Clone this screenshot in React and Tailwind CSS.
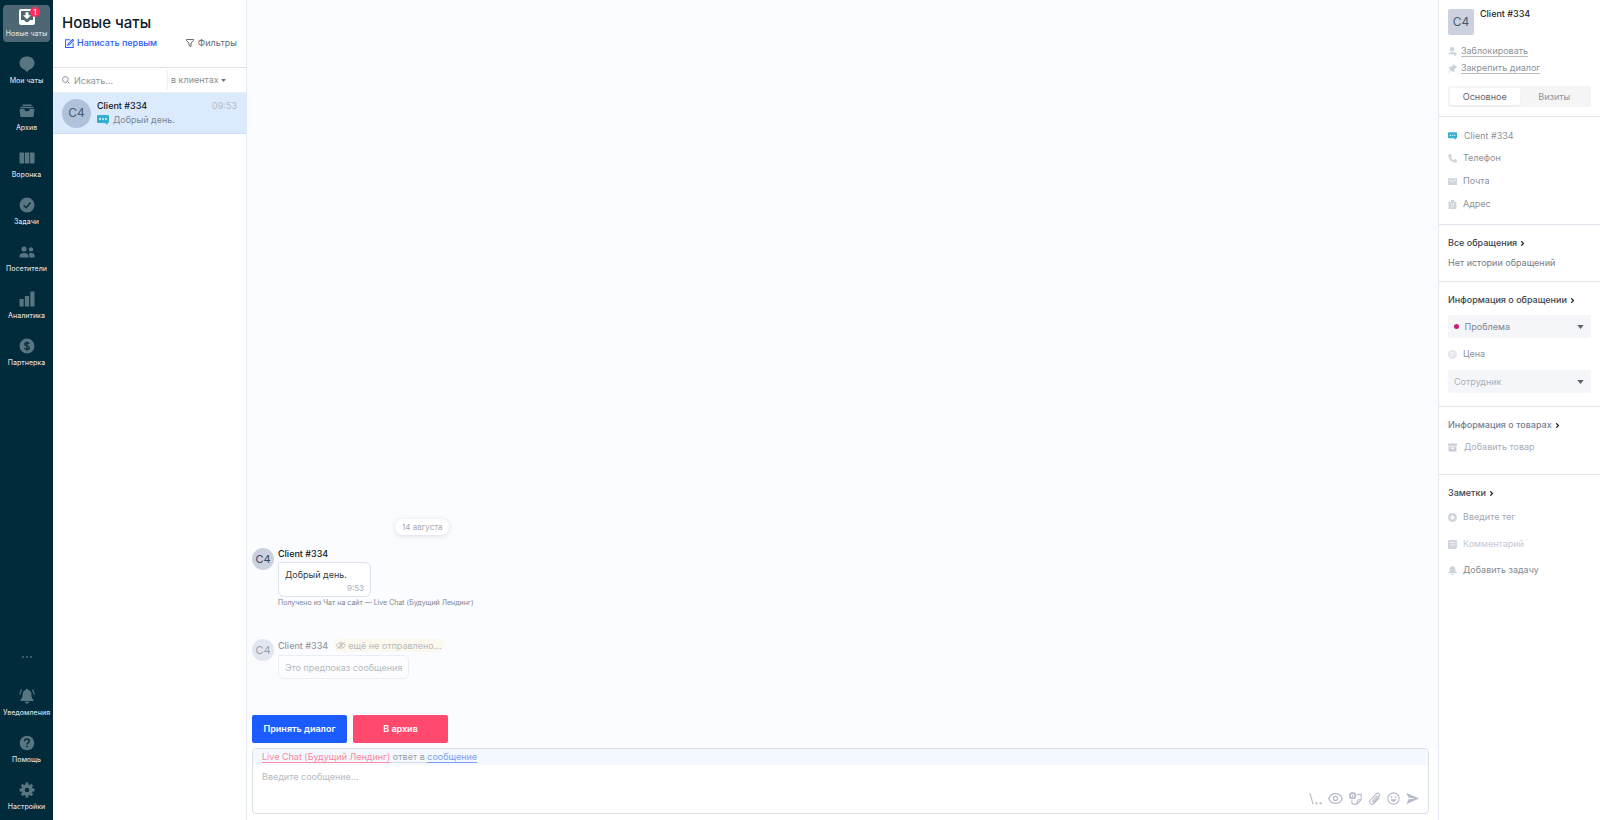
import React from "react";

function Svg({ children, className = "size-4", box = "0 0 16 16" }) {
  return (
    <svg viewBox={box} className={`${className} shrink-0`} fill="currentColor" aria-hidden="true">
      {children}
    </svg>
  );
}

const icons = {
  inbox: (
    <Svg>
      <path fillRule="evenodd" d="M2 0h12a2 2 0 0 1 2 2v12a2 2 0 0 1-2 2H2a2 2 0 0 1-2-2V2a2 2 0 0 1 2-2Zm0 2v9h3.200a2.900 2.900 0 0 0 5.600 0H14V2ZM6.500 3.200h3v3H12L8 10.200 4 6.200h2.500Z" />
    </Svg>
  ),
  chat: (
    <Svg>
      <path d="M8 .5c4.300 0 7.500 2.700 7.500 6.500S12.300 13.300 10.500 13.500L8 16l-2.500-2.500C3.700 13.300.5 10.800.5 7S3.700.5 8 .5Z" />
    </Svg>
  ),
  archive: (
    <Svg>
      <path d="M3.500 1.500h9V3h-9ZM1.500 3.700h13v1.500h-13ZM.5 6h4.800c.3 1.500 1.300 2.300 2.700 2.300S10.400 7.500 10.700 6h4.800l-1 8H1.500Z" />
    </Svg>
  ),
  columns: (
    <Svg>
      <path d="M.5 2.500h4.500v11H.5ZM5.800 2.500h4.500v11H5.800ZM11.100 2.500h4.400v11h-4.400Z" />
    </Svg>
  ),
  check: (
    <Svg>
      <circle cx="8" cy="8" r="7.500" />
      <path d="m4.700 8.200 2.500 2.500 4.300-5.200" fill="none" stroke="#012a3b" strokeWidth="1.400" />
    </Svg>
  ),
  people: (
    <Svg>
      <circle cx="5" cy="5" r="2.600" />
      <circle cx="12" cy="5.400" r="2.200" />
      <path d="M.5 13.500v-1.800C.5 9.800 2.500 9 5 9s4.500.8 4.500 2.700v1.800ZM10.500 13.500v-1.800c0-1-.4-1.700-.9-2.200 2.700-1 5.900-.3 5.900 1.700v2.300Z" />
    </Svg>
  ),
  bars: (
    <Svg>
      <rect x=".5" y="8" width="4.200" height="7.500" rx=".6" />
      <rect x="5.900" y="5" width="4.200" height="10.500" rx=".6" />
      <rect x="11.300" y=".5" width="4.200" height="15" rx=".6" />
    </Svg>
  ),
  dollar: (
    <Svg>
      <circle cx="8" cy="8" r="7.500" />
      <path d="M10.300 6c-.3-.9-1.200-1.300-2.300-1.300-1.300 0-2.300.6-2.300 1.600 0 2.300 4.700 1.100 4.700 3.500 0 1-1 1.600-2.400 1.600-1.300 0-2.200-.5-2.500-1.500M8 3.200v9.600" fill="none" stroke="#012a3b" strokeWidth="1.200" />
    </Svg>
  ),
  alarm: (
    <Svg>
      <path d="M8 .8c.7 0 1.200.5 1.200 1.100 2 .5 3.200 2.100 3.200 4.100 0 3.600.8 4.400 2.100 5.700v1.300H1.500v-1.300C2.800 10.400 3.600 9.600 3.600 6c0-2 1.200-3.600 3.200-4.100C6.800 1.300 7.300.8 8 .8ZM5.500 13.700h5c-.3 1.200-1.300 1.800-2.500 1.800s-2.200-.6-2.500-1.800Z" />
      <path d="M2.800 1.800C1.500 2.900.8 4.500.8 6.500M13.200 1.800c1.300 1.100 2 2.700 2 4.700" fill="none" stroke="currentColor" strokeWidth="1.300" />
    </Svg>
  ),
  help: (
    <Svg>
      <circle cx="8" cy="8" r="7.300" />
      <path d="M5.700 6.200C5.700 4.900 6.700 4.100 8 4.100s2.300.8 2.300 2c0 1.700-2.300 1.700-2.300 3.500M8 10.800v1.500" fill="none" stroke="#012a3b" strokeWidth="1.500" />
    </Svg>
  ),
  gear: (
    <Svg>
      <circle cx="8" cy="8" r="4" fill="none" stroke="currentColor" strokeWidth="3.600" />
      <path d="M8 .5v3M8 12.500v3M.5 8h3M12.500 8h3M2.700 2.700l2.100 2.100M11.200 11.200l2.100 2.100M13.300 2.700l-2.100 2.100M4.800 11.200l-2.100 2.100" stroke="currentColor" strokeWidth="2.800" />
    </Svg>
  ),
};

function NavItem({ icon, label, active, badge }) {
  return (
    <li className="px-[3px]">
      <a
        href="#"
        aria-current={active ? "page" : undefined}
        className={`relative flex h-[37px] flex-col items-center justify-between rounded pt-1 pb-1 ${
          active ? "bg-[#4d6874] text-white" : "text-[#5a7582]"
        }`}
      >
        {icons[icon]}
        <span className="text-[7px] leading-[9px] font-medium whitespace-nowrap text-[#d3dce0]">{label}</span>
        {badge && (
          <span className="absolute top-[2px] right-[10px] flex size-[10px] items-center justify-center rounded-full bg-[#ff2d5c] text-[7px] leading-none font-medium text-white">
            {badge}
          </span>
        )}
      </a>
    </li>
  );
}

function Sidebar() {
  return (
    <nav className="flex w-[53px] shrink-0 flex-col justify-between bg-[#012a3b] py-[5px]">
      <ul className="flex flex-col gap-[10px]">
        <NavItem icon="inbox" label="Новые чаты" active badge="1" />
        <NavItem icon="chat" label="Мои чаты" />
        <NavItem icon="archive" label="Архив" />
        <NavItem icon="columns" label="Воронка" />
        <NavItem icon="check" label="Задачи" />
        <NavItem icon="people" label="Посетители" />
        <NavItem icon="bars" label="Аналитика" />
        <NavItem icon="dollar" label="Партнерка" />
      </ul>
      <ul className="flex flex-col gap-[10px]">
        <li className="flex h-5 justify-center pt-px text-[#3b5967]">
          <button type="button" aria-label="Ещё" className="flex h-1 items-center gap-[2px]">
            <i className="size-[2px] bg-current" />
            <i className="size-[2px] bg-current" />
            <i className="size-[2px] bg-current" />
          </button>
        </li>
        <NavItem icon="alarm" label="Уведомления" />
        <NavItem icon="help" label="Помощь" />
        <NavItem icon="gear" label="Настройки" />
      </ul>
    </nav>
  );
}

function ChatBadge({ className }) {
  return (
    <Svg box="0 0 12 10" className={className}>
      <path fill="#37aecb" d="M1 0h10a1 1 0 0 1 1 1v6a1 1 0 0 1-1 1h-.5v2L8 8H1a1 1 0 0 1-1-1V1a1 1 0 0 1 1-1Z" />
      <path fill="#fff" d="M2.200 3.200h1.700v1.600H2.200ZM5.150 3.200h1.700v1.600h-1.700ZM8.100 3.200h1.700v1.600H8.100Z" />
    </Svg>
  );
}

function Caret({ className }) {
  return (
    <Svg box="0 0 8 5" className={className}>
      <path d="M0 0h8L4 5Z" />
    </Svg>
  );
}

function ChatList() {
  return (
    <section className="flex w-[194px] shrink-0 flex-col border-r border-[#e4e8f2] bg-white">
      <header className="flex h-[68px] flex-col border-b border-[#e0e3e8] px-[9px] pt-[13px]">
        <h1 className="text-[15px] leading-5 font-medium text-[#0e1a25]">Новые чаты</h1>
        <div className="mt-1 flex items-center justify-between pl-[3px] text-[9px] leading-[12px]">
          <button type="button" className="flex items-center gap-[3px] font-medium text-[#2b5cf6]">
            <Svg className="size-[9px]">
              <path d="M9 1.500H1v13.500h13.500V7M5 11l1-3 7.500-7.500 2 2L8 10Z" fill="none" stroke="currentColor" strokeWidth="1.800" />
            </Svg>
            Написать первым
          </button>
          <button type="button" className="flex items-center gap-1 text-[#666d75]">
            <Svg className="size-2">
              <path d="M1 1h14v2l-5 5v7l-4-2V8L1 3Z" fill="none" stroke="currentColor" strokeWidth="2" />
            </Svg>
            Фильтры
          </button>
        </div>
      </header>
      <div className="flex h-[25px] items-center border-b border-[#eceff3] pl-[9px] text-[#8a9097]">
        <Svg className="size-2">
          <path d="M11 11l4.500 4.500M12.500 7A5.700 5.700 0 1 1 1 7a5.700 5.700 0 0 1 11.500 0Z" fill="none" stroke="currentColor" strokeWidth="2" />
        </Svg>
        <input
          type="text"
          aria-label="Искать"
          placeholder="Искать..."
          className="h-5 min-w-0 flex-1 pl-1 text-[9px] outline-none placeholder:text-[#8e949b]"
        />
        <div className="relative flex h-5 w-[79px] items-center border-l border-[#eceff3]">
          <select aria-label="Где искать" className="h-5 w-full appearance-none pl-[3px] text-[9px] outline-none">
            <option>в клиентах</option>
          </select>
          <Caret className="pointer-events-none absolute right-5 h-[3px] w-[5px] text-[#6b7280]" />
        </div>
      </div>
      <a href="#" className="flex h-[41px] items-center gap-[6px] border-b border-[#c9dcf8] bg-[#dceafe] px-[9px]">
        <span className="flex size-[29px] items-center justify-center rounded-full bg-[#b0c1dc] text-[12px] text-[#4b5b6f]">C4</span>
        <span className="flex flex-1 flex-col gap-[2px] text-[9px] leading-[12px]">
          <span className="flex justify-between">
            <b className="font-medium text-[#0d1721]">Client #334</b>
            <time className="text-[#b1bccb]">09:53</time>
          </span>
          <span className="flex items-center gap-1 text-[#7b8694]">
            <ChatBadge className="h-[10px] w-3" />
            Добрый день.
          </span>
        </span>
      </a>
    </section>
  );
}

function Avatar() {
  return (
    <span className="flex size-[22px] shrink-0 items-center justify-center rounded-full bg-[#cbd1df] text-[11px] text-[#36475a]">
      C4
    </span>
  );
}

function Conversation() {
  return (
    <div className="flex flex-1 flex-col justify-end bg-[#fbfcff] px-[5px] pb-[5px]">
      <time className="ml-[143px] self-start rounded-full bg-white px-[7px] text-[8px] leading-4 text-[#a3a9b3] shadow-[0_1px_5px_rgba(60,70,90,0.18)]">
        14 августа
      </time>
      <article className="mt-[13px] flex items-start gap-1">
        <Avatar />
        <div className="flex flex-col items-start">
          <b className="text-[9px] leading-[11px] font-medium text-[#0d1721]">Client #334</b>
          <div className="mt-[3px] flex h-[35px] w-[93px] flex-col rounded-md rounded-tl-none border border-[#dde2ec] bg-white px-[6px] pt-[5px] text-[9px] text-[#333a42]">
            <p className="leading-[14px]">Добрый день.</p>
            <time className="self-end text-[8px] leading-[12px] text-[#a5acb6]">9:53</time>
          </div>
          <small className="mt-[1px] text-[7px] leading-[10px] text-[#7d848e]">
            Получено из Чат на сайт — Live Chat (Будущий Лендинг)
          </small>
        </div>
      </article>
      <article className="mt-[31px] flex items-start gap-1 opacity-50">
        <Avatar />
        <div className="flex flex-col items-start">
          <div className="flex items-center gap-[6px] text-[9px] leading-[13px]">
            <b className="font-medium text-[#28323d]">Client #334</b>
            <span className="flex items-center gap-[2px] rounded-md bg-[#fff5dc] px-[2px] text-[#6f7680]">
              <Svg box="0 0 20 14" className="h-[7px] w-[10px]">
                <path d="M1 7c4-7 14-7 18 0-4 7-14 7-18 0ZM3 13 17 1" fill="none" stroke="currentColor" strokeWidth="2" />
                <path d="M8 9c-2-3 1-6 4-4M12 6c1 3-1 4-3 4" fill="none" stroke="currentColor" strokeWidth="1.400" />
              </Svg>
              ещё не отправлено...
            </span>
          </div>
          <p className="mt-[3px] flex h-6 items-center rounded-md rounded-tl-none border border-[#dde2ec] bg-white px-[6px] pt-px text-[9px] text-[#6f7680]">
            Это предпоказ сообщения
          </p>
        </div>
      </article>
      <div className="mt-9 flex gap-[6px] text-[9px] font-semibold text-white">
        <button type="button" className="h-7 w-[95px] rounded-xs bg-[#1a5cff]">Принять диалог</button>
        <button type="button" className="h-7 w-[95px] rounded-xs bg-[#ff4a6e]">В архив</button>
      </div>
    </div>
  );
}

function Tool({ label, className, children }) {
  return (
    <button type="button" aria-label={label}>
      <Svg className={className}>{children}</Svg>
    </button>
  );
}

function Composer() {
  const line = { fill: "none", stroke: "currentColor", strokeWidth: 1.4 };
  return (
    <div className="bg-white px-[5px] pb-[6px]">
      <form className="mr-[4px] overflow-hidden rounded border border-[#d9dee7] bg-white">
        <p className="flex h-4 items-center bg-[#f3f9ff] px-[9px] text-[9px] leading-[11px] text-[#9aa1aa]">
          <a href="#" className="border-b border-[#ff8ba3] text-[#fa86a0]">Live Chat (Будущий Лендинг)</a>
          <span className="border-b border-[#d9dee5] whitespace-pre"> ответ в </span>
          <a href="#" className="border-b border-[#7f9dfa] text-[#7f9dfa]">сообщение</a>
        </p>
        <textarea
          aria-label="Сообщение"
          placeholder="Введите сообщение..."
          className="block h-[22px] w-full resize-none overflow-hidden px-[9px] pt-[6px] text-[9px] leading-[12px] outline-none placeholder:text-[#b5bac2]"
        />
        <div className="flex h-[26px] items-center justify-end gap-[6px] pr-[9px] pb-1 text-[#b8bdca]">
          <Tool label="Шаблоны" className="size-[13px]">
            <path d="M1 1l4 14" {...line} />
            <path d="M8 12.500h2.500V15H8ZM13 12.500h2.500V15H13Z" />
          </Tool>
          <Tool label="Просмотр" className="size-[15px]">
            <path d="M.8 8C3.500 1 12.500 1 15.200 8 12.500 15 3.500 15 .8 8Z" {...line} />
            <circle cx="8" cy="8" r="2.200" {...line} />
          </Tool>
          <Tool label="Заметка" className="size-[13px]">
            <path d="M9.500 3H15v6.500L10 15H5.500c-1.500 0-2-.5-2-2v-3M15 9.500h-3c-1.500 0-2 .5-2 2V15" {...line} />
            <circle cx="4.500" cy="4.500" r="3.300" fill="none" stroke="currentColor" strokeWidth="2.200" />
            <path d="M4.500 3v3" {...line} />
          </Tool>
          <Tool label="Прикрепить файл" className="size-[13px]">
            <path d="M11.500 4.500 6 10.500c-1 1.200.6 2.500 1.600 1.400l6-6.700c2-2.600-1.300-5.200-3.400-3L3 9.800c-3 3.600 1.600 7.200 4.500 4.200L14 7" {...line} />
          </Tool>
          <Tool label="Эмодзи" className="size-[13px]">
            <circle cx="8" cy="8" r="7" {...line} />
            <path d="M4.500 5.500h2v1.800h-2ZM9.500 5.500h2v1.800h-2ZM4.500 9h7c-.3 4-6.700 4-7 0Z" />
          </Tool>
          <Tool label="Отправить" className="size-[13px]">
            <path d="M.5 1L16 8 .5 15 3 9l8-1-8-1Z" />
          </Tool>
        </div>
      </form>
    </div>
  );
}

function Section({ children, className }) {
  return <section className={`border-b border-[#e2e5ee] px-[9px] ${className}`}>{children}</section>;
}

function Heading({ children, className = "text-[#3c444d]" }) {
  return (
    <h2 className={`flex items-center gap-[3px] text-[9px] leading-[12px] font-medium whitespace-nowrap ${className}`}>
      {children}
      <Svg className="size-[5px] text-[#15202b]">
        <path d="M4 1l7 7-7 7" fill="none" stroke="currentColor" strokeWidth="4" />
      </Svg>
    </h2>
  );
}

function Field({ id, label, icon, className = "placeholder:text-[#8d929a]" }) {
  return (
    <label htmlFor={id} className="flex h-3 items-center gap-[6px] text-[#d0d4dc]">
      <Svg className="size-[9px]">{icon}</Svg>
      <input
        id={id}
        type="text"
        aria-label={label}
        placeholder={label}
        className={`h-3 w-full min-w-0 text-[9px] leading-[12px] outline-none ${className}`}
      />
    </label>
  );
}

function Dropdown({ label, dot }) {
  return (
    <div className="relative flex h-[23px] items-center rounded-xs bg-[#f4f6fa]">
      {dot && <i className="ml-[6px] size-[5px] rounded-full bg-[#c71d7c]" />}
      <select
        aria-label={label}
        className={`h-full w-full appearance-none pl-[6px] text-[9px] outline-none ${dot ? "text-[#7c8592]" : "text-[#a9afb9]"}`}
      >
        <option>{label}</option>
      </select>
      <Caret className="pointer-events-none absolute right-[7px] h-[4px] w-[7px] text-[#59626d]" />
    </div>
  );
}

function ClientPanel() {
  return (
    <aside className="w-[162px] shrink-0 border-l border-[#e4e8f5] bg-white text-[9px] leading-[12px] text-[#8d929a]">
      <Section className="h-[117px] pt-[9px]">
        <div className="flex gap-[6px]">
          <span className="flex size-[26px] items-center justify-center rounded-xs bg-[#cbd1de] text-[12px] text-[#4b5b6c]">C4</span>
          <b className="text-[9px] leading-[10px] font-medium text-[#1d252e]">Client #334</b>
        </div>
        <div className="mt-[10px] flex flex-col items-start gap-[5px]">
          <button type="button" className="flex items-center gap-1 text-[#cdd2dc]">
            <Svg className="size-[9px]">
              <circle cx="7.500" cy="4" r="4" />
              <path d="M1 13c0-5.500 13-5.500 13 0Z" />
              <circle cx="12.500" cy="12.500" r="3" />
            </Svg>
            <span className="border-b border-[#b9bdc4] leading-[11px] text-[#8d929a]">Заблокировать</span>
          </button>
          <button type="button" className="flex items-center gap-1 text-[#cdd2dc]">
            <Svg className="size-[9px]">
              <path d="M10 0l6 6-2 1-3 3v3l-2 1.500L6 11.500.5 16 0 15.500 4.500 10 1.500 7 3 5h3l3-3Z" />
            </Svg>
            <span className="border-b border-[#b9bdc4] leading-[11px] text-[#8d929a]">Закрепить диалог</span>
          </button>
        </div>
        <div role="tablist" className="mt-3 grid h-[21px] grid-cols-2 rounded-xs bg-[#f5f5f6] p-[2px]">
          <button type="button" role="tab" aria-selected="true" className="rounded-xs bg-white text-[#5f656d] shadow-xs">
            Основное
          </button>
          <button type="button" role="tab" aria-selected="false">Визиты</button>
        </div>
      </Section>
      <Section className="flex h-[108px] flex-col pt-[13px]">
        <p className="flex items-center gap-[7px]">
          <ChatBadge className="h-[8px] w-[9px]" />
          Client #334
        </p>
        <div className="mt-[10px] flex flex-col gap-[11px]">
          <Field id="phone" label="Телефон" icon={<path d="M1 1l4-1 2 4-2 2c1 2 3 4 5 5l2-2 4 2-1 4C8 17-1 8 1 1Z" />} />
          <Field id="mail" label="Почта" icon={<path fillRule="evenodd" d="M0 2h16v12H0Zm2 2v1.500l6 4 6-4V4l-6 4Z" />} />
          <Field id="address" label="Адрес" icon={<path fillRule="evenodd" d="M5 3V0h6v3h4v13H1V3Zm0 3v3h2V6Zm4 0v3h2V6Zm-4 5v2h2v-2Zm4 0v2h2v-2Z" />} />
        </div>
      </Section>
      <Section className="flex h-[57px] flex-col gap-2 pt-3">
        <Heading>Все обращения</Heading>
        <p className="text-[#757b83]">Нет истории обращений</p>
      </Section>
      <Section className="h-[125px] pt-3">
        <Heading>Информация о обращении</Heading>
        <div className="mt-[9px] flex flex-col gap-[10px]">
          <Dropdown label="Проблема" dot />
          <Field id="price" label="Цена" icon={<><circle cx="8" cy="8" r="8" fill="#e3e6ed" /><path d="M6 12V4h2.500c3 0 3 4.500 0 4.500H5" fill="none" stroke="#fff" strokeWidth="1.200" /></>} />
          <Dropdown label="Сотрудник" />
        </div>
      </Section>
      <Section className="flex h-[68px] flex-col gap-[10px] pt-3">
        <Heading className="text-[#748094]">Информация о товарах</Heading>
        <button type="button" className="flex items-center gap-[7px] text-[#a9adb5]">
          <Svg className="size-[9px] text-[#c9cdd5]">
            <path fillRule="evenodd" d="M0 1h16v4H0ZM1 6h14v9H1Zm4 2v2h6V8Z" />
          </Svg>
          Добавить товар
        </button>
      </Section>
      <section className="flex flex-col px-[9px] pt-3">
        <Heading>Заметки</Heading>
        <div className="mt-3 flex flex-col gap-[15px]">
          <Field id="tag" label="Введите тег" className="placeholder:text-[#a5a9b1]" icon={<><circle cx="8" cy="8" r="8" /><path d="M8 4v8M4 8h8" stroke="#fff" strokeWidth="2.500" /></>} />
          <Field id="comment" label="Комментарий" className="placeholder:text-[#c3c9d4]" icon={<path fillRule="evenodd" d="M2 0h12a2 2 0 0 1 2 2v11l-3 3H2a2 2 0 0 1-2-2V2a2 2 0 0 1 2-2ZM3 4v1.500h10V4ZM3 8v1.500h10V8Z" />} />
        </div>
        <button type="button" className="mt-[14px] flex items-center gap-[6px] text-[#858a92]">
          <Svg className="size-[9px] text-[#cfd3db]">
            <path d="M8 0c4 1 5 3 5 6s1 5 3 6v1H0v-1c2-1 3-3 3-6s1-5 5-6ZM6 14h4c0 3-4 3-4 0Z" />
          </Svg>
          Добавить задачу
        </button>
      </section>
    </aside>
  );
}

export default function App() {
  return (
    <div className="flex min-h-screen bg-white font-['Inter','Noto_Sans',sans-serif]">
      <Sidebar />
      <ChatList />
      <main className="flex min-w-0 flex-1 flex-col">
        <Conversation />
        <Composer />
      </main>
      <ClientPanel />
    </div>
  );
}
